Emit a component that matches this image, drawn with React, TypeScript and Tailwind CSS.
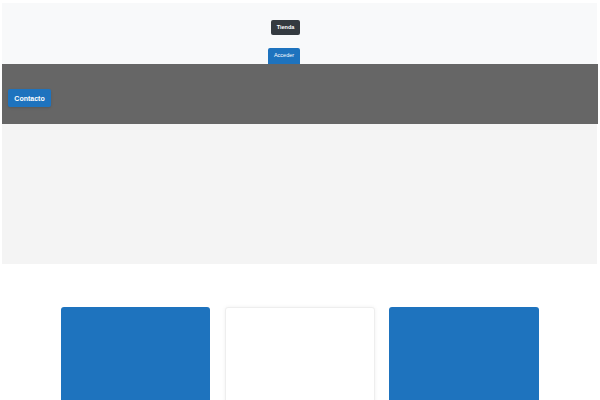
export default function App() {
  return (
    <div className="min-h-[400px] bg-white pt-[3px] overflow-hidden" style={{ fontFamily: '"Liberation Sans", Arial, sans-serif' }}>
      {/* Top bar */}
      <header className="ml-[2px] w-[595px] h-[61px] bg-[#f8f9fa] flex flex-col items-start">
        <button className="ml-[269px] mt-[17px] w-[29px] h-[15px] rounded-[2px] bg-[#343a40] text-white text-[5.5px] font-bold leading-none flex items-center justify-center">
          Tienda
        </button>
        <button className="ml-[266px] mt-[13px] w-[32px] h-[16px] rounded-t-[2px] bg-[#1e73be] text-white text-[5.5px] leading-none flex items-center justify-center">
          Acceder
        </button>
      </header>

      {/* Dark band */}
      <section className="ml-[2px] w-[596px] h-[60px] bg-[#666666] flex items-start">
        <button className="ml-[6px] mt-[25px] w-[43px] h-[18px] rounded-[2px] bg-[#1e73be] text-white text-[7px] font-bold leading-none flex items-center justify-center shadow-sm">
          Contacto
        </button>
      </section>

      {/* Light band */}
      <section className="ml-[2px] w-[595px] h-[140px] bg-[#f4f4f4]" />

      {/* Cards */}
      <div className="mt-[43px] ml-[61px] flex items-start">
        <div className="w-[149px] h-[120px] rounded-[3px] bg-[#1e73be]" />
        <div className="ml-[15px] w-[150px] h-[120px] rounded-[3px] bg-white border border-[#eeeeee] shadow-[0_0_4px_rgba(0,0,0,0.06)]" />
        <div className="ml-[14px] w-[150px] h-[120px] rounded-[3px] bg-[#1e73be]" />
      </div>
    </div>
  );
}
